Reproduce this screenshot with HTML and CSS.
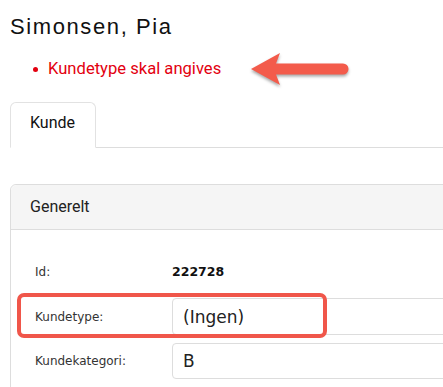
FILE: index.html
```html
<!DOCTYPE html>
<html lang="da">
<head>
    <meta charset="UTF-8">
    <meta name="viewport" content="width=device-width, initial-scale=1.0">
    <title>Kunde</title>
    <link rel="stylesheet" href="styles.css">
</head>
<body>
    <div class="page">
        <h1 class="customer-name">Simonsen, Pia</h1>

        <div class="errors">
            <span class="bullet"></span>
            <span class="error-text">Kundetype skal angives</span>
            <!-- pil der peger paa fejlen -->
            <svg class="arrow" width="108" height="42" viewBox="0 0 108 42">
                <path d="M4 21 L33 5 L29 15.5 L96 15.5 A5.5 5.5 0 0 1 96 26.5 L29 26.5 L33 37 Z" fill="#f35b4b"/>
            </svg>
        </div>

        <div class="tabs">
            <div class="tab active">Kunde</div>
        </div>

        <div class="panel">
            <div class="panel-heading">Generelt</div>
            <div class="panel-body">
                <div class="field-row">
                    <label>Id:</label>
                    <span class="value">222728</span>
                </div>
                <div class="field-row highlighted">
                    <label for="kundetype">Kundetype:</label>
                    <div class="input">(Ingen)</div>
                    <span class="highlight-box"></span>
                </div>
                <div class="field-row">
                    <label for="kundekategori">Kundekategori:</label>
                    <div class="input">B</div>
                </div>
            </div>
        </div>
    </div>
</body>
</html>
```

FILE: styles.css
```css
html, body {
    overflow: hidden;
}

body {
    margin: 0;
    padding: 0;
    background-color: white;
    font-family: "Roboto", "Liberation Sans", sans-serif;
}

.page {
    padding-left: 10px;
}

.customer-name {
    margin: 0;
    padding-top: 14px;
    font-family: "Liberation Sans", Arial, sans-serif;
    font-weight: normal;
    font-size: 22px;
    line-height: 26px;
    letter-spacing: 1.6px;
    color: #111;
}

.errors {
    display: flex;
    align-items: center;
    height: 20px;
    margin-top: 19px;
    padding-left: 23px;
}

.bullet {
    width: 5px;
    height: 5px;
    border-radius: 50%;
    background-color: #e3000f;
    margin-right: 10px;
}

.error-text {
    font-size: 16.6px;
    line-height: 20px;
    color: #e3000f;
}

.arrow {
    flex-shrink: 0;
    margin-left: 26px;
    filter: drop-shadow(0 2px 1.5px rgba(0, 0, 0, 0.35));
}

.tabs {
    display: flex;
    margin-top: 23px;
    border-bottom: 1px solid #ddd;
    margin-right: -20px;
}

.tab {
    padding: 10px 20px 14px 19px;
    font-size: 16px;
    line-height: 20px;
    color: #111;
    border: 1px solid #e2e2e2;
    border-bottom-color: white;
    border-radius: 6px 6px 0 0;
    margin-bottom: -1px;
    background-color: white;
}

.panel {
    margin-top: 36px;
    margin-right: -30px;
    border: 1px solid #ddd;
    border-radius: 6px 0 0 0;
}

.panel-heading {
    padding: 12px 19px;
    font-size: 16px;
    line-height: 20px;
    color: #222;
    background-color: #f5f5f5;
    border-bottom: 1px solid #ddd;
    border-radius: 6px 0 0 0;
}

.panel-body {
    padding: 23px 0 20px 24px;
    display: flex;
    flex-direction: column;
    gap: 8px;
}

.field-row {
    position: relative;
    display: flex;
    align-items: center;
    height: 37px;
}

.field-row label {
    width: 137px;
    flex-shrink: 0;
    font-family: "DejaVu Sans", Verdana, sans-serif;
    font-size: 12px;
    color: #333;
}

.field-row .value {
    font-family: "DejaVu Sans", Verdana, sans-serif;
    font-weight: bold;
    font-size: 12.5px;
    color: #111;
}

.input {
    flex: 1;
    box-sizing: border-box;
    height: 37px;
    display: flex;
    align-items: center;
    padding-left: 10px;
    border: 1px solid #ddd;
    border-radius: 4px;
    font-family: "DejaVu Sans", Verdana, sans-serif;
    font-size: 17px;
    color: #222;
}

.field-row:last-child {
    height: 36px;
}

.field-row:last-child .input {
    height: 36px;
}

.highlight-box {
    position: absolute;
    left: -18px;
    top: -5px;
    width: 310px;
    height: 45px;
    box-sizing: border-box;
    border: 4px solid #f0564a;
    border-radius: 7px;
}
```
